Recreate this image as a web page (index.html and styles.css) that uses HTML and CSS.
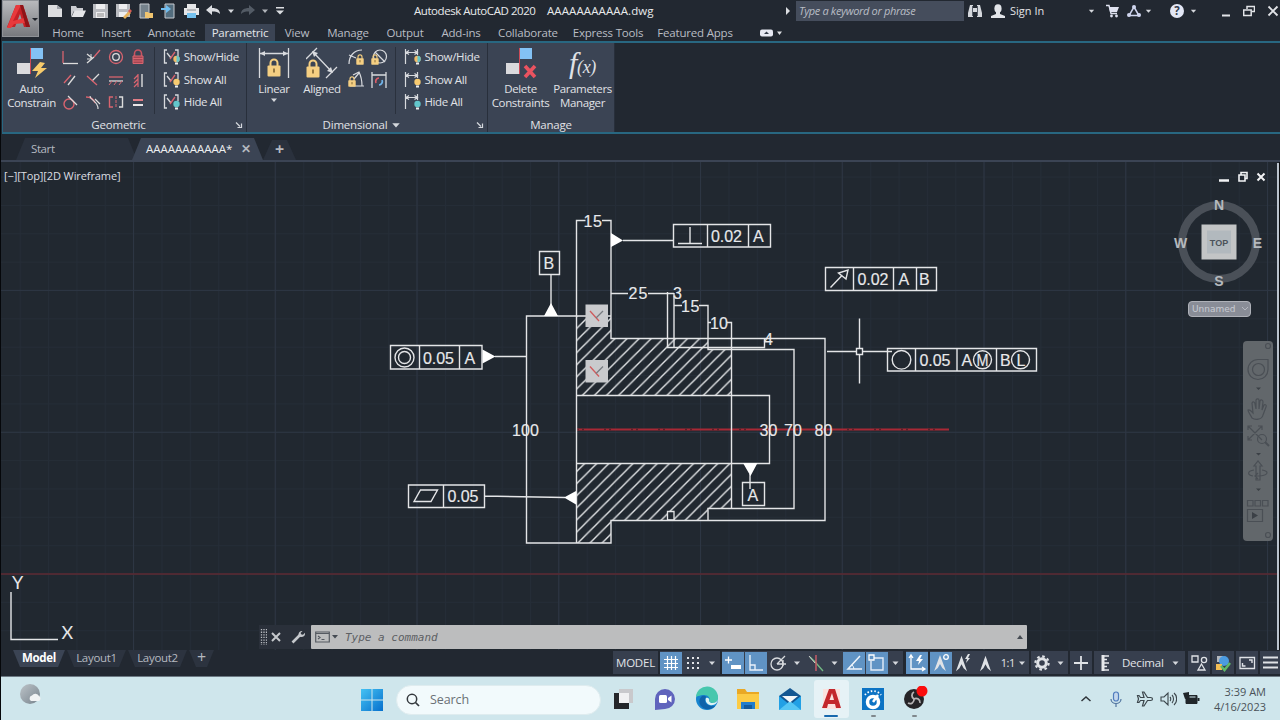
FILE: index.html
```html
<!DOCTYPE html>
<html lang="en">

<head>
    <meta charset="UTF-8" />
    <meta name="viewport" content="width=device-width, initial-scale=1.0" />
    <title>Autodesk AutoCAD 2020</title>
    <link rel="stylesheet" href="styles.css">
</head>

<body>
    <!-- shared shapes -->
    <svg class="defs">
        <symbol id="down" viewBox="0 0 8 8"><path d="M1 2.5h6L4 6z" fill="#d5d8dd" /></symbol>
        <symbol id="lock" viewBox="0 0 14 18">
            <path d="M3.5 8V4.5a3.5 3.5 0 0 1 7 0V8" fill="none" stroke="#f5cf82" stroke-width="2" />
            <rect x="0.5" y="7" width="13" height="11" rx="1" fill="#f5cf82" />
            <path d="M7 10v4" stroke="#7d6333" stroke-width="1.6" />
        </symbol>
        <symbol id="launch" viewBox="0 0 8 8"><path d="M1 1.5l4 4M6.5 2.5v4h-4" fill="none" stroke="#d5d8dd" stroke-width="1.2" /></symbol>
        <symbol id="geo" viewBox="0 0 18 18">
            <path d="M4 2H1.500v13H4M12 2h3v6" fill="none" stroke="#d8dade" stroke-width="1.3" />
            <path d="M4 5l4 5" stroke="#d8dade" stroke-width="1.3" />
            <path d="M7 11l5-7" stroke="#d9646f" stroke-width="1.3" />
        </symbol>
        <symbol id="dim" viewBox="0 0 18 18">
            <path d="M1.500 1v15M13.500 1v6M2 4.500h11M5 2.500l-3 2 3 2M10.500 2.500l3 2-3 2" fill="none" stroke="#d8dade" stroke-width="1.2" />
        </symbol>
        <symbol id="person" viewBox="0 0 20 20"><path d="M10 1L3.500 19l4-3.500L10 11l2.500 4.500 4 3.500z" fill="#dfe2e6" /></symbol>
    </svg>

    <div class="window">
        <header class="top">
            <div class="app-button">
                <svg width="36" height="36" viewBox="0 0 36 36">
                    <path d="M4 26L13 4h7l7 22h-6l-4-13-5 13z" fill="#c52026" />
                    <path d="M13 4h5l-8 16 11-3 2 5-12 1-3 4H4z" fill="#e8393c" />
                    <path d="M17 4h3l7 22h-4z" fill="#8e1418" />
                    <path d="M29 17h6l-3 3z" fill="#1f232a" />
                </svg>
            </div>
            <div class="top-rows">
                <div class="titlebar">
                    <div class="quick">
                        <svg width="17" height="16" viewBox="0 0 17 16"><path d="M1 2h9l5 4v8H1z" fill="#dcdde0" /><path d="M10 2v4h5" fill="#9ea2aa" /></svg>
                        <svg width="17" height="16" viewBox="0 0 17 16"><path d="M1 14V3h5l1 2h6v3H4z" fill="#c9cbd0" /><path d="M4.500 7.500H16l-3 6.500H1.500z" fill="#e4e5e8" /></svg>
                        <svg width="17" height="16" viewBox="0 0 17 16"><path d="M1 1h15v14H1z" fill="#b9bbc0" /><path d="M4 1h9v5H4zM4 9h9v6H4z" fill="#eeeef0" /><path d="M5 11h7M5 13h7" stroke="#888" /></svg>
                        <svg width="17" height="16" viewBox="0 0 17 16"><path d="M1 1h14v13H1z" fill="#b9bbc0" /><path d="M4 1h8v5H4zM4 9h8v5H4z" fill="#eeeef0" /><path d="M8 14l6-6 2 2-6 6z" fill="#e8b25a" /><path d="M13 8l2-2 2 2-2 2z" fill="#d65d55" /></svg>
                        <svg width="17" height="16" viewBox="0 0 17 16"><path d="M3 1h9v14H3z" fill="#75828c" stroke="#c7cbd1" /><path d="M8 9h3l1 1h4v5H8z" fill="#f0c46f" /></svg>
                        <svg width="17" height="16" viewBox="0 0 17 16"><path d="M5 1h9v14H5z" fill="#536d7e" stroke="#c7cbd1" /><path d="M1 5h5V2l5 4-5 4V7H1z" fill="#70bdf0" /></svg>
                        <svg width="17" height="16" viewBox="0 0 17 16"><path d="M4 1h9v4H4zM1 5h15v7H1z" fill="#e5e6e8" /><path d="M4 10h9v5H4z" fill="#75c2ef" /><path d="M4 7h9" stroke="#8a8d92" /></svg>
                        <svg width="17" height="16" viewBox="0 0 17 16"><path d="M1 7l6-5v3c5 0 8 2 8 6-2-2-4-2.500-8-2.500V12z" fill="#dcdee2" /></svg>
                        <svg class="mini"><use href="#down" /></svg>
                        <svg class="dim" width="17" height="16" viewBox="0 0 17 16"><path d="M16 7l-6-5v3C5 5 2 7 2 11c2-2 4-2.500 8-2.500V12z" fill="#606873" /></svg>
                        <svg class="mini dim"><use href="#down" /></svg>
                        <svg width="12" height="16" viewBox="0 0 12 16"><path d="M2 4h8v1.500H2zM2 7.500h8L6 11.500z" fill="#dcdee2" /></svg>
                    </div>
                    <div class="title"><span>Autodesk AutoCAD 2020</span><span>AAAAAAAAAAA.dwg</span></div>
                    <svg class="play" width="6" height="8" viewBox="0 0 6 8"><path d="M1 0l4 4-4 4z" fill="#dcdee2" /></svg>
                    <div class="keyword">Type a keyword or phrase</div>
                    <div class="account">
                        <svg width="16" height="14" viewBox="0 0 16 14"><path d="M3 1h3v3h4V1h3l2 8v4h-5V8H6v5H1V9z" fill="#d5d8dd" /><path d="M5.500 2v10M10.500 2v10" stroke="#555c67" /></svg>
                        <svg width="16" height="16" viewBox="0 0 16 16"><ellipse cx="8" cy="5.500" rx="3.600" ry="4.300" fill="#e3e5e9" /><path d="M1 15v-2l5-2v-2h4v2l5 2v2z" fill="#e3e5e9" /></svg>
                        <span>Sign In</span>
                    </div>
                    <div class="helpers">
                        <svg class="mini"><use href="#down" /></svg>
                        <svg width="15" height="14" viewBox="0 0 15 14"><path d="M1 1.500h3l2 8h6" fill="none" stroke="#dfe2f0" stroke-width="1.400" /><path d="M4 3h10l-2 5H5z" fill="#dfe2f0" /><circle cx="6.500" cy="12" r="1.400" fill="#dfe2f0" /><circle cx="11.500" cy="12" r="1.400" fill="#dfe2f0" /></svg>
                        <svg width="16" height="14" viewBox="0 0 16 14"><path d="M8 3l5 8.500H3z" fill="none" stroke="#cfd5ee" stroke-width="1.500" /><circle cx="8" cy="3" r="2" fill="#cfd5ee" /><circle cx="3" cy="11" r="2" fill="#cfd5ee" /><circle cx="13" cy="11" r="2" fill="#cfd5ee" /></svg>
                        <svg class="mini"><use href="#down" /></svg>
                        <i class="rule"></i>
                        <span class="help">?</span>
                        <svg class="mini"><use href="#down" /></svg>
                    </div>
                    <div class="win-controls">
                        <svg width="10" height="12" viewBox="0 0 10 12"><path d="M1 10.500h8" stroke="#e2e4e8" stroke-width="2" /></svg>
                        <svg width="12" height="12" viewBox="0 0 12 12"><path d="M4 4V1.500h7.500v5H9M.700 5h7.500v5.500H.700z" fill="none" stroke="#e2e4e8" stroke-width="1.500" /></svg>
                        <svg width="12" height="12" viewBox="0 0 12 12"><path d="M1.500 1.500l9 9M10.500 1.500l-9 9" stroke="#e2e4e8" stroke-width="1.800" /></svg>
                    </div>
                </div>
                <nav class="menu">
                    <span>Home</span>
                    <span>Insert</span>
                    <span>Annotate</span>
                    <span class="active">Parametric</span>
                    <span>View</span>
                    <span>Manage</span>
                    <span>Output</span>
                    <span>Add-ins</span>
                    <span>Collaborate</span>
                    <span>Express Tools</span>
                    <span>Featured Apps</span>
                    <svg width="24" height="10" viewBox="0 0 24 10"><rect x="1" y="1.500" width="13" height="7" rx="2" fill="#e6e8f2" /><path d="M5 6h5L7.500 3.500z" fill="#333b48" /><path d="M18 3.500h5L20.500 7z" fill="#dcdee2" /></svg>
                </nav>
            </div>
        </header>

        <section class="ribbon">
            <div class="panel geometric">
                <div class="panel-body">
                    <div class="big">
                        <svg width="32" height="32" viewBox="0 0 32 32">
                            <path d="M1 16h13v11H1z" fill="#dadadd" /><path d="M15 1h12v11H15z" fill="#83c2f5" />
                            <path d="M14.500 1v26" stroke="#cc4b58" />
                            <path d="M24 15l-8 9h6l-3 7 12-10h-6l4-5z" fill="#f7cb6b" />
                        </svg>
                        <span>Auto<br>Constrain</span>
                    </div>
                    <div class="icon-grid four">
                        <svg viewBox="0 0 18 18"><path d="M2 3v12" stroke="#d9646f" stroke-width="1.300" /><path d="M2 15.500h15" stroke="#ddd" stroke-width="1.300" /></svg>
                        <svg viewBox="0 0 18 18"><path d="M3 15l7-6M3 6l5 4" stroke="#ddd" stroke-width="1.300" /><path d="M10 9l6-7" stroke="#d9646f" stroke-width="1.300" /><path d="M7 6v5H3" fill="none" stroke="#ddd" /></svg>
                        <svg viewBox="0 0 18 18" fill="none"><circle cx="9" cy="9" r="6.500" stroke="#d9646f" stroke-width="1.300" /><circle cx="9" cy="9" r="3.300" stroke="#ddd" stroke-width="1.300" /></svg>
                        <svg viewBox="0 0 18 18"><path d="M5.500 8V5.500a3.500 3.500 0 0 1 7 0V8" fill="none" stroke="#c85461" stroke-width="1.600" /><path d="M4 8h10v7.500H4zM4 10.500h10M4 13h10" fill="#a34753" stroke="#d9646f" /></svg>
                        <svg viewBox="0 0 18 18"><path d="M3 12l7-8" stroke="#d9646f" stroke-width="1.300" /><path d="M7 14l7-9" stroke="#ddd" stroke-width="1.300" /></svg>
                        <svg viewBox="0 0 18 18"><path d="M8 10l7-7" stroke="#ddd" stroke-width="1.300" /><path d="M3 5l10 9" stroke="#d9646f" stroke-width="1.300" /></svg>
                        <svg viewBox="0 0 18 18"><path d="M2 6h14" stroke="#d9646f" stroke-width="1.300" /><path d="M2 10h14" stroke="#ddd" stroke-width="1.300" /><path d="M5 10l-3 4M10 10l-3 4M15 10l-3 4" stroke="#d9646f" /></svg>
                        <svg viewBox="0 0 18 18"><path d="M9 3v13M9 4L5 8M9 8l-4 4M9 12l-4 4" stroke="#d9646f" stroke-width="1.200" /><path d="M13 3v13" stroke="#ddd" stroke-width="1.400" /></svg>
                        <svg viewBox="0 0 18 18"><circle cx="8" cy="11" r="5" fill="none" stroke="#d9646f" stroke-width="1.400" /><path d="M7 3l9 9" stroke="#ddd" stroke-width="1.300" /></svg>
                        <svg viewBox="0 0 18 18" fill="none"><path d="M2 4c6 0 8 3 9 6" stroke="#d9646f" stroke-width="1.300" /><path d="M6 3c0 5 8 4 8 13M11 6l5 5" stroke="#ddd" stroke-width="1.200" /></svg>
                        <svg viewBox="0 0 18 18" fill="none"><path d="M6 4H2.500v10H6" stroke="#d9646f" stroke-width="1.400" /><path d="M12 4h3.500v10H12" stroke="#ddd" stroke-width="1.400" /><path d="M9 3v12" stroke="#d9646f" stroke-dasharray="3 1" /></svg>
                        <svg viewBox="0 0 18 18"><path d="M4 7h10" stroke="#e17d86" stroke-width="2" /><path d="M4 12h10" stroke="#e9e5e7" stroke-width="2" /></svg>
                    </div>
                    <i class="split"></i>
                    <div class="toggles">
                        <div><svg viewBox="0 0 18 18"><use href="#geo" /><circle cx="13.500" cy="11" r="3.200" fill="#f0bb69" /><path d="M13.500 7.800a3.200 3.200 0 0 1 0 6.400z" fill="#62c6cb" /><path d="M12 14.500h3v2h-3z" fill="#eee" /></svg>Show/Hide</div>
                        <div><svg viewBox="0 0 18 18"><use href="#geo" /><circle cx="13.500" cy="11" r="3.200" fill="#f7ca70" /><path d="M12 14.500h3v2h-3z" fill="#eee" /></svg>Show All</div>
                        <div><svg viewBox="0 0 18 18"><use href="#geo" /><circle cx="13.500" cy="11" r="3.200" fill="#62c6cb" /><path d="M12 14.500h3v2h-3z" fill="#eee" /></svg>Hide All</div>
                    </div>
                </div>
                <div class="panel-name">Geometric<svg class="corner"><use href="#launch" /></svg></div>
            </div>

            <div class="panel dimensional">
                <div class="panel-body">
                    <div class="big linear">
                        <svg width="32" height="32" viewBox="0 0 32 32">
                            <path d="M1.500 1v30M30.500 1v30M2 6.500h28" stroke="#d8dade" stroke-width="1.300" />
                            <path d="M2 6.500l5-2.500v5zM30 6.500l-5-2.500v5z" fill="#d8dade" />
                            <use href="#lock" x="9" y="11" width="14" height="19" />
                        </svg>
                        <span>Linear</span>
                        <svg class="mini"><use href="#down" /></svg>
                    </div>
                    <div class="big aligned">
                        <svg width="32" height="32" viewBox="0 0 32 32">
                            <path d="M0 12L11 1M20 31l11-11M7 5l19 20" stroke="#d8dade" stroke-width="1.300" />
                            <path d="M6 4l6 2-4 4zM27 26l-6-2 4-4z" fill="#d8dade" />
                            <use href="#lock" x="0" y="12" width="14" height="19" />
                        </svg>
                        <span>Aligned</span>
                    </div>
                    <div class="icon-grid two">
                        <svg viewBox="0 0 18 18"><path d="M2 16C2 8 7 2 15 2M2 7l7 3" fill="none" stroke="#d8dade" stroke-width="1.200" /><use href="#lock" x="9" y="6" width="8" height="11" /></svg>
                        <svg viewBox="0 0 18 18"><circle cx="10" cy="8.500" r="6.500" fill="none" stroke="#d8dade" stroke-width="1.200" /><path d="M5 4l10 10" stroke="#d8dade" stroke-width="1.200" /><use href="#lock" x="1" y="6" width="8" height="11" /></svg>
                        <svg viewBox="0 0 18 18"><path d="M3 15h14M6 4l6-3c2 4 3 8 3 14M7 8l5-6" fill="none" stroke="#d8dade" stroke-width="1.200" /><use href="#lock" x="1" y="5" width="8" height="11" /></svg>
                        <svg viewBox="0 0 18 18"><path d="M2 1v16M16 1v16M2 4h14" stroke="#d8dade" stroke-width="1.300" /><path d="M6 12a3.500 3.500 0 0 1 3-5" fill="none" stroke="#e05f6a" stroke-width="1.700" /><path d="M12 9a3.500 3.500 0 0 1-3 5" fill="none" stroke="#71b6ec" stroke-width="1.700" /></svg>
                    </div>
                    <i class="split"></i>
                    <div class="toggles">
                        <div><svg viewBox="0 0 18 18"><use href="#dim" /><circle cx="13.500" cy="11" r="3.200" fill="#f0bb69" /><path d="M13.500 7.800a3.200 3.200 0 0 1 0 6.400z" fill="#62c6cb" /><path d="M12 14.500h3v2h-3z" fill="#eee" /></svg>Show/Hide</div>
                        <div><svg viewBox="0 0 18 18"><use href="#dim" /><circle cx="13.500" cy="11" r="3.200" fill="#f7ca70" /><path d="M12 14.500h3v2h-3z" fill="#eee" /></svg>Show All</div>
                        <div><svg viewBox="0 0 18 18"><use href="#dim" /><circle cx="13.500" cy="11" r="3.200" fill="#62c6cb" /><path d="M12 14.500h3v2h-3z" fill="#eee" /></svg>Hide All</div>
                    </div>
                </div>
                <div class="panel-name">Dimensional<svg class="mini"><use href="#down" /></svg><svg class="corner"><use href="#launch" /></svg></div>
            </div>

            <div class="panel manage">
                <div class="panel-body">
                    <div class="big">
                        <svg width="32" height="32" viewBox="0 0 32 32">
                            <path d="M1 16h13v11H1z" fill="#dadadd" /><path d="M15 1h12v11H15z" fill="#83c2f5" />
                            <path d="M14.500 1v26" stroke="#cc4b58" />
                            <path d="M20 19l10 11M30 19L20 30" stroke="#ea5360" stroke-width="3.600" />
                        </svg>
                        <span>Delete<br>Constraints</span>
                    </div>
                    <div class="big">
                        <div class="fx"><b>f</b>(x)</div>
                        <span>Parameters<br>Manager</span>
                    </div>
                </div>
                <div class="panel-name">Manage</div>
            </div>
        </section>

        <div class="doc-tabs">
            <div class="doc-tab start">Start</div>
            <div class="doc-tab current">AAAAAAAAAAA*<b>✕</b></div>
            <div class="doc-tab add">+</div>
        </div>

        <main class="canvas">
            <svg class="drawing" viewBox="0 162 1280 488" width="1280" height="488">
                <defs>
                    <pattern id="minor" x="19.700" y="6.500" width="28.350" height="28.350" patternUnits="userSpaceOnUse"><path d="M0 .5H29M.5 0V29" stroke="#252d37" fill="none" /></pattern>
                    <pattern id="major" x="133" y="148" width="141.750" height="141.900" patternUnits="userSpaceOnUse"><path d="M0 .5H142M.5 0V142" stroke="#2d3643" fill="none" /></pattern>
                    <pattern id="hatch" x="9.700" y="0" width="12.100" height="12.100" patternUnits="userSpaceOnUse"><path d="M-3 15.100L15.100 -3M-3 3L3 -3M9.100 15.100L15.100 9.100" stroke="#e6e8ea" stroke-width="1.350" /></pattern>
                    <pattern id="hatch-low" href="#hatch" x="7.600" />
                </defs>
                <rect x="0" y="162" width="1280" height="488" fill="url(#minor)" />
                <rect x="0" y="162" width="1280" height="488" fill="url(#major)" />
                <path d="M0 574h1280" stroke="#5d2931" stroke-width="1.300" />

                <path d="M576 316H611V338H708V349H732V395H576z" fill="url(#hatch)" />
                <path d="M576 463H732V508H708V520H611V543H576z" fill="url(#hatch-low)" />
                <path d="M667.500 511.500h6.500v8.500h-6.500z" fill="#212830" stroke="#e4e5e7" stroke-width="1.300" />
                <path class="center" d="M577 429.500H949" />
                <path class="center-dash" d="M577 429.500H949" />

                <g class="ink">
                    <!-- part outline and extension lines -->
                    <path d="M576.500 543V220.500h9M602 220.500h9V338.500H825V520.500H611V543H526.500V316H611" />
                    <path d="M611 293.500h17M648 293.500h26M667.500 292V347.500H764.500V339M674 293V347.500M674 305.500h8M699 305.500h9V349.500H794V508.500H708V520M708 322.500h3M727 322.500h4.500V508" />
                    <path d="M576 395.500H769.500V463.500H576" />
                    <!-- datums -->
                    <path d="M551 274.500V305M539.500 251.500h20v23h-20zM742.500 482.500h22v23h-22zM750 474v15" />
                    <!-- tolerance frames -->
                    <path d="M623 240.500h50M673.500 224.500h97v22.500h-97zM707.500 224v23M748.500 224v23M678 243.500h24M690 227v16.500" />
                    <path d="M390.500 345.500h91.500v23.500h-91.500zM419.500 345.500v23.500M459.500 345.500v23.500M495 356.500h31" />
                    <path d="M408.500 485h76v22.500h-76zM443.500 485v22.500M484 496l81 1.500M414 501.500l6.500-11.500h17l-6.500 11.500z" />
                    <path d="M825.500 267.500h111v23h-111zM853.500 267.500v23M893.500 267.500v23M916.500 267.500v23M830.500 287.500l11-11.500M848 270l-2 9-7.500-6z" />
                    <path d="M887.500 348.500h149v22.500h-149zM915.500 348.500v22.500M957 348.500v22.500M996.500 348.500v22.500" />
                    <circle cx="404.500" cy="357.500" r="9.500" />
                    <circle cx="404.500" cy="357.500" r="6" />
                    <circle cx="901.500" cy="359.800" r="9.300" />
                    <circle cx="982.500" cy="359.800" r="9" />
                    <circle cx="1020.500" cy="359.800" r="9" />
                    <!-- crosshair -->
                    <path d="M859.500 318.500V348M859.500 354V383.500M827 351.500h29M862 351.500h30M856.500 348.500h6v6h-6z" />
                    <!-- ucs icon -->
                    <path d="M11 592v47.500h47" />
                </g>
                <path d="M611 233l12 7.500-12 6.500zM551 303l7 13h-14zM482.500 349.500l13 7-13 7zM576 491v13.500l-12-7zM743 463h14.500l-7 13z" fill="#fff" />

                <g class="note">
                    <text x="583.500" y="227" textLength="18.500">15</text>
                    <text x="628.500" y="298.500" textLength="19">25</text>
                    <text x="673" y="298.500">3</text>
                    <text x="681" y="311.500" textLength="18.500">15</text>
                    <text x="710" y="328.500" textLength="18">10</text>
                    <text x="764" y="344.500">4</text>
                    <text x="512" y="435.500" textLength="27">100</text>
                    <text x="759.500" y="435.500" textLength="18">30</text>
                    <text x="784" y="435.500" textLength="18">70</text>
                    <text x="814.500" y="435.500" textLength="18">80</text>
                    <text x="543.500" y="269">B</text>
                    <text x="747.500" y="500.500">A</text>
                    <text x="711" y="242" textLength="31">0.02</text>
                    <text x="753" y="242">A</text>
                    <text x="423" y="363.500" textLength="31">0.05</text>
                    <text x="464.500" y="363.500">A</text>
                    <text x="447.500" y="502" textLength="31">0.05</text>
                    <text x="857.500" y="285" textLength="31">0.02</text>
                    <text x="898.500" y="285">A</text>
                    <text x="919" y="285">B</text>
                    <text x="919.500" y="366" textLength="31">0.05</text>
                    <text x="961.500" y="366">A</text>
                    <text x="976.500" y="365.500" textLength="12" lengthAdjust="spacingAndGlyphs">M</text>
                    <text x="1000" y="366">B</text>
                    <text x="1016.500" y="365.500" textLength="8">L</text>
                </g>
                <g class="axis"><text x="12" y="588.500">Y</text><text x="61.500" y="638.500">X</text></g>

                <!-- constraint badges -->
                <g id="badge"><path d="M585.500 304.500h22.500v22.500h-22.500z" fill="#c9cacd" /><path d="M590 311l9 10" stroke="#cf5a5c" stroke-width="1.300" /><path d="M596 318l7-7" stroke="#777b80" stroke-width="1.300" /></g>
                <use href="#badge" y="55.500" />
            </svg>

            <div class="view-label">[−][Top][2D Wireframe]</div>
            <div class="view-controls">
                <svg width="10" height="12" viewBox="0 0 10 12"><path d="M0 9.500h10" stroke="#f2f3f5" stroke-width="2.500" /></svg>
                <svg width="10" height="12" viewBox="0 0 10 12"><path d="M3 3.500V1.500h6v6H7M1 4h6v6H1z" fill="none" stroke="#f2f3f5" stroke-width="1.600" /></svg>
                <svg width="10" height="12" viewBox="0 0 10 12"><path d="M1.500 2.500l7 7M8.500 2.500l-7 7" stroke="#f2f3f5" stroke-width="2" /></svg>
            </div>
            <svg class="cube" width="96" height="96" viewBox="0 0 96 96">
                <circle cx="48" cy="48" r="37" fill="none" stroke="#4a5058" stroke-width="8" />
                <path d="M30.500 30.500h35v35h-35z" fill="#c3c5c6" />
                <path d="M36 36.500h24v23H36z" fill="#b2b9be" />
                <text class="face" x="48" y="51.500">TOP</text>
                <text x="48" y="15.500">N</text>
                <text x="48" y="91.500">S</text>
                <text x="9.500" y="53.500">W</text>
                <text x="86.500" y="53.500">E</text>
            </svg>
            <div class="ucs-name">Unnamed<svg width="8" height="6" viewBox="0 0 8 6"><path d="M1 1l3 3 3-3" fill="none" stroke="#b5b8c0" /></svg></div>
            <svg class="navbar" width="30" height="200" viewBox="0 0 30 200">
                <g fill="none" stroke="#4a4f55" stroke-width="1.200">
                    <circle cx="25" cy="5" r="2.500" />
                    <path d="M15 18.500h10v10a10 10 0 1 1-10-10z" />
                    <circle cx="15.500" cy="28.500" r="6" />
                    <path d="M9 77c-2-4-4-6-4-8 2-1 3 1 5 3l-1-10c1-2 3-1 3 1l1 5V59c1-2 3-1 3 0v9l1-8c1-2 3-1 3 1l-1 8 2-5c1-1 3 0 2 2l-3 8c-1 5-8 5-11 3z" />
                    <path d="M5 85l14 14M5 99l14-14M5 89v-4h4M15 85h4v4M5 95v4h4" />
                    <circle cx="19" cy="98" r="4.500" />
                    <path d="M22 101l4 4" stroke-width="2" />
                    <path d="M13 139v-14h-2l4-5 4 5h-2v14zM10 135c-6-1-6-5 1-6M19 129c7 1 7 5-2 6h-4M15 132l-3 3 3 3" />
                    <path d="M4.500 159.500h5.500v5.500H4.500zM12 159.500h5.500v5.500H12zM19.500 159.500h5.500v5.500h-5.500zM4.500 168.500h15v12h-15z" />
                    <circle cx="25" cy="194" r="2.500" />
                </g>
                <path d="M13 46.500h5l-2.500 2.500zM13 112h5l-2.500 2.500zM13 147.500h5l-2.500 2.500zM9 171l6 3.500-6 3.500z" fill="#3b4046" />
            </svg>

            <div class="command">
                <svg width="8" height="18" viewBox="0 0 8 18"><path d="M2.500 1v16M5 1v16M7.500 1v16" stroke="#b9bcc1" stroke-width="1.300" stroke-dasharray="1.300 1.300" /></svg>
                <svg width="10" height="10" viewBox="0 0 10 10"><path d="M1 1l8 8M9 1L1 9" stroke="#c5c8cc" stroke-width="2" /></svg>
                <svg width="14" height="14" viewBox="0 0 14 14"><path d="M1.500 12.500L9 5" stroke="#c5c8cc" stroke-width="2.600" /><path d="M8 6C6.500 3 9 .500 11.500 1L9.500 3l1 1.500 1.500.300 2-2c.500 3-2 5-5 4z" fill="#c5c8cc" /></svg>
                <div class="prompt">
                    <svg width="24" height="12" viewBox="0 0 24 12"><path d="M.700 1h13.600v10H.700zM.700 2.500h13.600M3 5l2 1.500L3 8M6.500 8.500h3" fill="none" stroke="#555a61" stroke-width="1.200" /><path d="M17 4h6l-3 3.500z" fill="#444a52" /></svg>
                    <span>Type a command</span>
                    <svg width="8" height="6" viewBox="0 0 8 6"><path d="M1 5h6L4 1z" fill="#454b53" /></svg>
                </div>
            </div>
        </main>

        <footer class="status">
            <div class="layouts">
                <span class="on">Model</span>
                <span>Layout1</span>
                <span>Layout2</span>
                <span class="plus">+</span>
            </div>
            <div class="tools">
                <div class="group model">MODEL</div>
                <div class="group">
                    <svg class="on" viewBox="0 0 22 22"><path d="M7.500 4v14M11.500 4v14M15.500 4v14M4 7.500h14M4 11.500h14M4 15.500h14" stroke="#fff" stroke-width="1.200" /></svg>
                    <svg viewBox="0 0 22 22"><path d="M5 6h14M5 11h14M5 16h14" stroke="#e2e4e8" stroke-width="2" stroke-dasharray="2 3" /></svg>
                    <svg class="arr wide"><use href="#down" /></svg>
                </div>
                <div class="group">
                    <svg class="on" viewBox="0 0 22 22"><path d="M3 8h7M6.500 4.500v7" stroke="#fff" stroke-width="1.300" /><path d="M9 13h10v4H9z" fill="#fff" /></svg>
                    <svg class="on" viewBox="0 0 22 22"><path d="M5 3v15h13M5 13h5v5" fill="none" stroke="#e9f1fa" stroke-width="1.400" /></svg>
                    <svg viewBox="0 0 22 22"><circle cx="10" cy="12" r="6" fill="none" stroke="#d8dade" stroke-width="1.300" /><path d="M10 12l8-8M10 12h9M16 8v6" stroke="#d8dade" stroke-width="1.300" /></svg>
                    <svg class="arr wide"><use href="#down" /></svg>
                    <svg viewBox="0 0 22 22"><path d="M5 5l6 6 7 8" stroke="#72b883" stroke-width="1.400" fill="none" /><path d="M11 3v16" stroke="#d05e68" stroke-width="1.400" /><path d="M4 4l6 7" stroke="#ccc" /></svg>
                    <svg class="arr"><use href="#down" /></svg>
                    <svg class="on" viewBox="0 0 22 22"><path d="M17 4L5 17h14" fill="none" stroke="#f0f5fb" stroke-width="1.500" /><path d="M11 17a6 6 0 0 0-2-4" fill="none" stroke="#f0f5fb" /></svg>
                    <svg class="on" viewBox="0 0 22 22"><path d="M8 6h9v12H5V9" fill="none" stroke="#e4edf8" stroke-width="1.400" /><path d="M3 3h5v5H3z" fill="#6093c4" stroke="#fff" stroke-width="1.300" /></svg>
                    <svg class="arr"><use href="#down" /></svg>
                </div>
                <div class="group">
                    <svg class="on" viewBox="0 0 22 22"><path d="M5 4v13h13M3 6l2-3 2 3M16 15l3 2-3 2" fill="none" stroke="#fff" stroke-width="1.300" /><path d="M14 3l-4 6h3l-1 4 5-6h-3l2-4z" fill="#fff" /></svg>
                </div>
                <div class="group">
                    <svg class="on" viewBox="0 0 22 22"><use href="#person" x="1" y="2" width="18" height="18" /><circle cx="16" cy="5" r="2.300" fill="#6093c4" stroke="#fff" stroke-width="1.300" /></svg>
                    <svg viewBox="0 0 22 22"><use href="#person" x="1" y="3" width="17" height="17" /><path d="M16 2l-3 5h2l-1 4 4-5h-2l2-4z" fill="#dfe2e6" /></svg>
                    <svg viewBox="0 0 22 22"><use href="#person" x="3" y="3" width="17" height="17" /></svg>
                    <span class="ratio">1:1</span>
                    <svg class="arr thin"><use href="#down" /></svg>
                </div>
                <div class="group">
                    <svg viewBox="0 0 22 22"><circle cx="11" cy="11" r="4.300" fill="none" stroke="#dfe2e6" stroke-width="3" /><circle cx="11" cy="11" r="6.600" fill="none" stroke="#dfe2e6" stroke-width="2.200" stroke-dasharray="2.600 2.580" /></svg>
                    <svg class="arr"><use href="#down" /></svg>
                </div>
                <div class="group">
                    <svg viewBox="0 0 22 22"><path d="M11 4v14M4 11h14" stroke="#dfe2e6" stroke-width="1.800" /></svg>
                </div>
                <div class="group unit-group">
                    <svg viewBox="0 0 22 22"><path d="M9 4h5M9 7.500h3M9 11h5M9 14.500h3M9 18h5" stroke="#e6e8eb" stroke-width="1.400" /><path d="M8 3v16" stroke="#e6e8eb" stroke-width="3" /></svg>
                    <span class="units">Decimal</span>
                    <svg class="arr"><use href="#down" /></svg>
                </div>
                <div class="group">
                    <svg viewBox="0 0 22 22"><path d="M4 4h6v6H4zM10 18l3.500-6 3.500 6z" fill="none" stroke="#dfe2e6" stroke-width="1.300" /><circle cx="16" cy="8" r="2.600" fill="none" stroke="#dfe2e6" stroke-width="1.300" /></svg>
                </div>
                <div class="group">
                    <svg viewBox="0 0 22 22"><path d="M5 4h6v6H5z" fill="#b4b8bd" /><circle cx="12" cy="9" r="5" fill="#4c9be0" /><path d="M4 12h6v6H4z" fill="#f2bd54" /><path d="M9 14l3.500 4L18 11" fill="none" stroke="#5fb868" stroke-width="2.500" /></svg>
                </div>
                <div class="group">
                    <svg viewBox="0 0 22 22"><path d="M4 5.500h14.500v11H4z" fill="none" stroke="#dfe2e6" stroke-width="1.300" /><path d="M13 8h3v3M9.500 14h-3v-3" fill="none" stroke="#dfe2e6" stroke-width="1.400" /></svg>
                </div>
                <div class="group">
                    <svg viewBox="0 0 22 22"><path d="M3 5.500h15M3 10.500h15M3 15.500h15" stroke="#dfe2e6" stroke-width="2" /></svg>
                </div>
            </div>
        </footer>
    </div>

    <div class="taskbar">
        <svg class="weather" width="24" height="24" viewBox="0 0 24 24"><defs><linearGradient id="moon" x2="1" y2="1"><stop stop-color="#bdc4c9" /><stop offset="1" stop-color="#77838c" /></linearGradient></defs><circle cx="11" cy="11" r="10" fill="url(#moon)" /><path d="M12 18a3 3 0 0 1 1-5.500 4 4 0 0 1 7 .500c2 1 2 4 0 5z" fill="#f1f3f4" /></svg>
        <svg class="win" width="22" height="22" viewBox="0 0 22 22"><defs><linearGradient id="wg" x2="1" y2="1"><stop stop-color="#45c2f3" /><stop offset="1" stop-color="#0670cd" /></linearGradient></defs><path d="M0 0h10.500v10.500H0zM11.500 0H22v10.500H11.500zM0 11.500h10.500V22H0zM11.500 11.500H22V22H11.500z" fill="url(#wg)" /></svg>
        <div class="search">
            <svg width="16" height="16" viewBox="0 0 16 16"><circle cx="7" cy="7" r="4.700" fill="none" stroke="#33383d" stroke-width="1.500" /><path d="M10.500 10.500L14 14" stroke="#33383d" stroke-width="1.700" /></svg>
            Search
        </div>
        <div class="apps">
            <div><svg viewBox="0 0 26 26"><path d="M3 7h15v16H3z" fill="#24262a" /><path d="M8 3h14v14H8z" fill="#c9c9cc" /><path d="M8 7h10v10H8z" fill="#f1f1f2" /></svg></div>
            <div><svg viewBox="0 0 26 26"><path d="M3 24V13a10 10 0 1 1 10 10z" fill="#6064bd" /><rect x="7" y="9" width="8" height="8" rx="1.500" fill="#fff" /><path d="M16 12l3.500-2.500v7L16 14z" fill="#fff" /></svg></div>
            <div><svg viewBox="0 0 26 26"><circle cx="13" cy="13" r="11" fill="#1684cf" /><path d="M2 11A11 11 0 0 1 24 12c0 6-8 6-9 3 2-3-1-6-5-6-4 0-8 2-8 2z" fill="#47c7ad" /><path d="M7 11c-5 6 2 14 9 12 4-1 5-3 5-3-8 1-12-4-9-9-1-2-4-1-5 0z" fill="#1063aa" /><path d="M12 12c2-1 4 1 3 3 1 3 8 3 9-2 0 4-4 7-8 6-4-1-5-5-4-7z" fill="#dff4f5" /></svg></div>
            <div><svg viewBox="0 0 26 26"><path d="M2 3h8l2 3h12v17H2z" fill="#e9a825" /><path d="M2 8h22v15H2z" fill="#fccb45" /><path d="M6 16h14v7H6z" fill="#217dcc" /><path d="M9 19h8v4H9z" fill="#145a9b" /></svg></div>
            <div><svg viewBox="0 0 26 26"><path d="M2 10l11-8 11 8v14H2z" fill="#145792" /><path d="M2 10l11 9 11-9v14H2z" fill="#21a0e5" /><path d="M2 24l11-9 11 9z" fill="#55c6f4" /><path d="M5 10h16l-8 6.500z" fill="#f4f7f9" /></svg></div>
            <div class="open"><svg viewBox="0 0 26 26"><path d="M5 3h17v20H5z" fill="#fbe1de" /><path d="M4 22L11 3h6l6 19h-5l-1-4H10l-1 4zM11.500 14h4.500L14 7z" fill="#c3272c" fill-rule="evenodd" /></svg><i></i></div>
            <div><svg viewBox="0 0 26 26"><path d="M2 2h22v22H2z" fill="#0c73c4" /><circle cx="13" cy="16" r="5.500" fill="none" stroke="#fff" stroke-width="3.500" /><path d="M13 16l5-7" stroke="#fff" stroke-width="2.500" /><path d="M5 9a10 10 0 0 1 16 0" fill="none" stroke="#fff" stroke-width="1.800" stroke-dasharray="1.500 2" /></svg><i></i></div>
            <div><svg viewBox="0 0 26 26"><circle cx="12" cy="13" r="10" fill="#252427" /><path d="M12 6a4 4 0 0 0 0 7M6 17a4 4 0 0 0 6-4M18 17a4 4 0 0 0-6-4" fill="none" stroke="#b6b3b4" stroke-width="1.800" /><circle cx="20" cy="5" r="5.500" fill="#fb0d0d" /></svg><i></i></div>
        </div>
        <div class="tray">
            <svg viewBox="0 0 18 18"><path d="M4.500 11L9 7l4.500 4" fill="none" stroke="#30363b" stroke-width="1.500" /></svg>
            <svg viewBox="0 0 18 18"><rect x="6.500" y="2" width="5" height="9" rx="2.500" fill="#c3d6ec" stroke="#507cbd" stroke-width="1.200" /><path d="M4 9c0 6 10 6 10 0M9 13.500V17" fill="none" stroke="#50749f" stroke-width="1.200" /></svg>
            <svg viewBox="0 0 18 18"><path d="M16.500 9c0-1-1-1.500-2-1.500h-3L8 2H6.500l1.500 5.500H4.500L3 5.500H1.500L2.500 9l-1 3.500H3l1.500-2H8L6.500 16H8l3.500-5.500h3c1 0 2-.500 2-1.500z" fill="none" stroke="#3c464c" stroke-width="1.200" /></svg>
            <svg viewBox="0 0 18 18"><path d="M2 7h3l4-4v12l-4-4H2zM11 7c1 1 1 3 0 4M13 5c2 2 2 6 0 8M15 3c3.500 3 3.500 9 0 12" fill="none" stroke="#3c464c" stroke-width="1.100" /></svg>
            <svg viewBox="0 0 18 18"><path d="M4 5.500h11v8H4z" fill="#20262a" stroke="#20262a" /><path d="M15.500 8h2v3h-2zM1 3l6-1v6l-4 1z" fill="#20262a" /><path d="M7.500 7h6" stroke="#cfe7ee" /></svg>
        </div>
        <div class="clock">3:39 AM<br>4/16/2023</div>
    </div>
</body>

</html>
```
FILE: styles.css
```css
* {
    box-sizing: border-box;
}

body {
    margin: 0;
    width: 1280px;
    height: 720px;
    overflow: hidden;
    background: #222831;
    color: #dcdee2;
    font-family: "Open Sans", "Noto Sans", sans-serif;
    font-size: 11.5px;
    line-height: 14px;
    white-space: nowrap;
}

svg {
    display: block;
    flex: none;
}

.defs {
    position: absolute;
    width: 0;
    height: 0;
}

.window {
    height: 677px;
    border-left: 1px solid #05070a;
    display: flex;
    flex-direction: column;
}

.mini {
    width: 8px;
    height: 8px;
}

.dim {
    opacity: 0.8;
}

/* title bar and menu */
.top {
    height: 41px;
    display: flex;
    background: #222831;
}

.app-button {
    width: 37px;
    height: 37px;
    margin-left: 1px;
    background: linear-gradient(#b8b9bc, #77797e);
    border: 1px solid #8f9297;
}

.top-rows {
    flex: 1;
}

.titlebar {
    height: 24px;
    display: grid;
    grid-template-columns: 375px 371px 11px 168px 124px 101px 80px;
    align-items: center;
    padding-bottom: 3px;
}

.quick {
    display: flex;
    align-items: center;
    padding-left: 8px;
    gap: 5.6px;
}

.quick .mini {
    margin: 0 -1px 0 -1px;
}

.title {
    display: flex;
    color: #e8eaec;
    font-weight: 500;
}

.title span:first-child {
    width: 133px;
    letter-spacing: -0.45px;
}

.title span:last-child {
    letter-spacing: 0.1px;
}

.keyword {
    height: 20px;
    background: #454d5c;
    padding: 3px 3px;
    font-style: italic;
    font-size: 11px;
    letter-spacing: -0.35px;
    color: #b9bdc5;
}

.account {
    display: flex;
    align-items: center;
    gap: 7px;
    padding-left: 3px;
    color: #e2e4e7;
}

.account span {
    font-size: 11px;
    margin-left: -3px;
}

.helpers {
    display: flex;
    align-items: center;
    gap: 6px;
}

.helpers .rule {
    width: 1px;
    height: 18px;
    background: #4a515d;
}

.helpers .mini {
    width: 7px;
    margin: 0 2px 0 -3px;
}

.helpers .mini:first-child {
    margin: 0 4px 0 0;
}

.help {
    flex: none;
    width: 14px;
    height: 14px;
    border-radius: 50%;
    background: #e3e7f5;
    color: #333c4c;
    font-weight: bold;
    text-align: center;
    margin: 0 3px 0 4px;
}

.win-controls {
    display: flex;
    gap: 12px;
    padding-left: 32px;
}

.menu {
    height: 17px;
    margin-left: 4px;
    display: grid;
    grid-template-columns: 50px 46px 65px 72px 42px 60px 54px 58px 76px 84px 90px 40px;
    text-align: center;
    color: #b9bdc4;
    font-weight: 500;
    letter-spacing: -0.2px;
    line-height: 17px;
    align-items: center;
}

.menu svg {
    margin-left: 19px;
}

.menu .active {
    background: #3b4454;
    color: #e4e6e9;
    margin: 0 1px;
}

/* ribbon */
.ribbon {
    height: 93px;
    display: flex;
    border: 2px solid #286781;
    border-left-width: 1px;
    border-right: 0;
    margin-left: 1px;
    font-weight: 500;
    letter-spacing: -0.35px;
}

.panel {
    background: #3b4454;
    border-right: 1px solid #282f3b;
    color: #e0e2e6;
}

.geometric {
    width: 244px;
}

.dimensional {
    width: 241px;
}

.manage {
    width: 127px;
}

.panel-body {
    height: 74px;
    display: flex;
    padding-top: 4px;
}

.big {
    display: flex;
    flex-direction: column;
    align-items: center;
    text-align: center;
    width: 57px;
}

.big span {
    margin-top: 3px;
}

.geometric .icon-grid {
    margin-left: -1px;
}

.icon-grid {
    display: grid;
    grid-auto-rows: 22.5px;
    justify-items: center;
    align-items: center;
    height: 68px;
    margin-top: -1px;
}

.icon-grid svg {
    width: 18px;
    height: 18px;
}

.four {
    grid-template-columns: repeat(4, 22.7px);
}

.two {
    grid-template-columns: repeat(2, 22.7px);
}

.split {
    width: 1px;
    height: 67px;
    background: #2a313d;
    margin-left: 4px;
}

.dimensional .split {
    margin-left: 5px;
}

.toggles {
    margin: -1px 0 0 8px;
}

.toggles div {
    display: flex;
    align-items: center;
    height: 22.5px;
    gap: 3px;
}

.dimensional .toggles div {
    gap: 2px;
}

.toggles svg {
    width: 18px;
    height: 18px;
}

.linear {
    margin-left: 2px;
    width: 50px;
}

.aligned {
    width: 46px;
}

.manage .big {
    width: 59px;
}

.manage .big:first-child {
    width: 65px;
}

.fx {
    height: 32px;
    font: italic 18px/32px "Liberation Serif", serif;
}

.fx b {
    font-size: 30px;
    font-weight: normal;
}

.panel-name {
    display: flex;
    justify-content: center;
    align-items: center;
    height: 15px;
    position: relative;
    padding-right: 12px;
    letter-spacing: -0.2px;
}

.dimensional .panel-name {
    gap: 4px;
    padding-right: 10px;
}

.dimensional .panel-name .mini {
    width: 10px;
    height: 10px;
}

.manage .panel-name {
    padding: 0;
}

.corner {
    position: absolute;
    right: 3px;
    top: 4px;
    width: 8px;
    height: 8px;
}

/* document tabs */
.doc-tabs {
    height: 28px;
    display: flex;
    align-items: flex-end;
    padding-left: 15px;
    border-bottom: 2px solid #3b4454;
}

.doc-tab {
    height: 22px;
    line-height: 21px;
    background: #2a313d;
    clip-path: polygon(9px 0, calc(100% - 9px) 0, 100% 100%, 0 100%);
}

.start {
    width: 121px;
    padding-left: 15px;
    color: #b5b9c0;
    letter-spacing: -0.4px;
}

.current {
    width: 131px;
    margin-left: -5px;
    padding-left: 14px;
    background: #3b4454;
    color: #eceef0;
    font-weight: 500;
}

.current b {
    color: #b5b9c0;
    margin-left: 9px;
}

.add {
    width: 33px;
    text-align: center;
    font-size: 16px;
    font-weight: bold;
    line-height: 19px;
    color: #b5b9c0;
    height: 20px;
}

/* drawing area */
.canvas {
    height: 488px;
    position: relative;
    background: #212830;
    border-right: 1px solid #090b0e;
    overflow: hidden;
}

.drawing {
    margin-left: -1px;
}

.canvas::after {
    content: "";
    position: absolute;
    right: 0;
    top: 1px;
    bottom: 0;
    width: 2px;
    background: #bac3cd;
}

.ink {
    fill: none;
    stroke: #e4e5e7;
    stroke-width: 1.4;
}

.center {
    stroke: #a92835;
    stroke-width: 1.8;
}

.center-dash {
    stroke: #5e2028;
    stroke-width: 1.8;
    stroke-dasharray: 2 3 2 20;
}

.note {
    font-family: "Liberation Sans", Arial, sans-serif;
    font-size: 16px;
    fill: #e8e9eb;
    stroke: #e8e9eb;
    stroke-width: 0.15px;
}

.axis {
    font-family: "Lato", sans-serif;
    font-weight: 400;
    font-size: 18px;
    fill: #e4e5e7;
}

.view-label {
    position: absolute;
    left: 3px;
    top: 7px;
    font-size: 11px;
    font-weight: 500;
    letter-spacing: -0.1px;
}

.view-controls {
    position: absolute;
    right: 13px;
    top: 9px;
    display: flex;
    gap: 8.5px;
}

.cube {
    position: absolute;
    left: 1170px;
    top: 31.5px;
    font: bold 14px "Liberation Sans", Arial, sans-serif;
    fill: #b5b9bd;
    text-anchor: middle;
}

.cube .face {
    font-size: 9px;
    fill: #4b535a;
}

.ucs-name {
    position: absolute;
    left: 1187px;
    top: 139px;
    width: 63px;
    height: 16px;
    border: 1px solid #aeb1b8;
    border-radius: 4px;
    background: #898d97;
    color: #c8cbd2;
    font: 9px/13px "DejaVu Sans", sans-serif;
    padding-left: 3px;
    display: flex;
    align-items: center;
    gap: 5px;
}

.navbar {
    position: absolute;
    left: 1242px;
    top: 179px;
    background: #62676b;
    border-radius: 4px;
}

.command {
    position: absolute;
    left: 258px;
    top: 463px;
    width: 768px;
    height: 24px;
    display: flex;
    align-items: center;
    gap: 4px;
    background: #2a303a;
}

.command > svg:nth-child(3) {
    margin: 0 2px 0 6px;
}

.prompt {
    flex: 1;
    height: 24px;
    display: flex;
    align-items: center;
    padding: 0 3px 0 4px;
    gap: 6px;
    background: #bcbdbe;
    color: #5d6064;
    border-radius: 1px;
}

.prompt span {
    flex: 1;
    font: italic 11px "DejaVu Sans Mono", monospace;
}

/* status bar */
.status {
    height: 27px;
    display: flex;
    background: #222831;
    border-bottom: 1px solid #6c7983;
    overflow: hidden;
}

.layouts {
    flex: none;
    width: 612px;
    display: flex;
    padding-left: 12px;
    gap: 2px;
    color: #b5b9c0;
    letter-spacing: -0.3px;
}

.layouts span {
    width: 59px;
    height: 17px;
    line-height: 15px;
    text-align: center;
    background: #2c333f;
    clip-path: polygon(0 0, 100% 0, calc(100% - 7px) 100%, 7px 100%);
}

.layouts .on {
    width: 52px;
    background: #3b4454;
    color: #fff;
    font-weight: bold;
}

.layouts .plus {
    width: 25px;
    font-size: 16px;
}

.tools {
    flex: none;
    display: flex;
    gap: 2.2px;
    padding-top: 1px;
    font-weight: 500;
}

.group {
    display: flex;
    align-items: center;
    height: 23px;
    background: #373f4e;
    color: #e2e4e8;
}

.model {
    width: 45px;
    justify-content: center;
    letter-spacing: -0.2px;
}

.group svg {
    width: 22px;
    height: 22px;
}

.group svg + svg.on {
    margin-left: 1px;
}

.group .on {
    background: #6093c4;
}

.group .arr {
    width: 15px;
    height: 8px;
}

.group .wide {
    width: 16px;
}

.group .thin {
    width: 14px;
}

.ratio {
    width: 19px;
    text-align: right;
    font-size: 11px;
    letter-spacing: -0.5px;
}

.unit-group {
    padding: 0 2px 0 1px;
}

.units {
    width: 51px;
    text-align: center;
    letter-spacing: -0.2px;
}

/* windows taskbar */
.taskbar {
    height: 43px;
    background: #cfe6ec;
    display: flex;
    align-items: center;
    color: #4a5258;
    border-left: 1px solid #05070a;
}

.weather {
    margin: -8px 0 0 18px;
}

.win {
    margin-left: 318px;
    margin-top: 3px;
}

.search {
    margin: 2px 0 0 13px;
    width: 205px;
    height: 30px;
    border-radius: 15px;
    border: 1px solid #dfecef;
    background: #f2fafc;
    padding-left: 8px;
    display: flex;
    align-items: center;
    gap: 9px;
    font-size: 12.5px;
    letter-spacing: -0.1px;
    color: #6a7075;
}

.apps {
    display: flex;
    margin-left: 5px;
}

.apps div {
    width: 35px;
    height: 38px;
    margin-right: 6.6px;
    padding-top: 6px;
    border-radius: 3px;
    display: flex;
    flex-direction: column;
    align-items: center;
}

.apps svg {
    width: 26px;
    height: 26px;
}

.apps i {
    width: 5px;
    height: 2px;
    margin-top: 3px;
    border-radius: 1px;
    background: #80888d;
}

.apps .open {
    background: #e6f2f6;
}

.apps .open i {
    width: 14px;
    background: #1668ad;
}

.tray {
    display: flex;
    margin-left: 138px;
    gap: 5px;
}

.tray svg {
    width: 18px;
    height: 18px;
}

.tray svg:nth-child(2) {
    margin: 0 6px 0 7px;
}

.clock {
    margin-left: auto;
    padding-right: 14px;
    text-align: right;
    font-size: 11px;
    line-height: 15px;
}
```
